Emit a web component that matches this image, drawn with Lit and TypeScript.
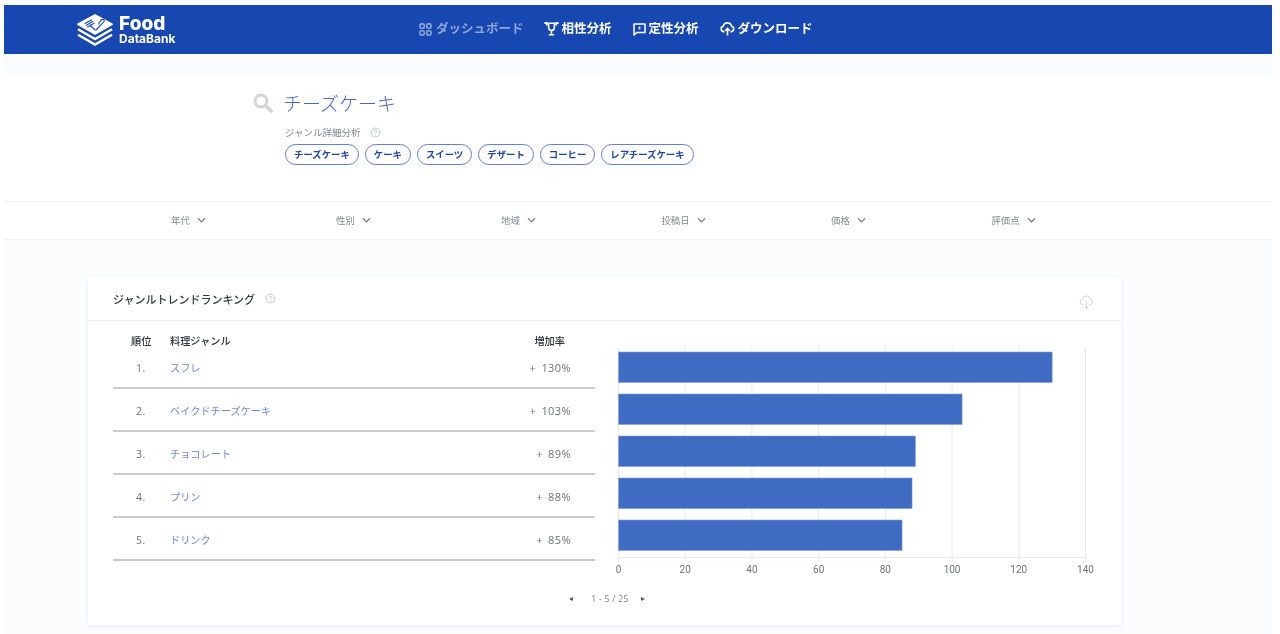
import { LitElement, html, css, svg } from "lit";
import { customElement } from "lit/decorators.js";

const chevron = html`<svg class="chev" viewBox="0 0 10 6" width="9" height="6" fill="none" stroke="#6f7378" stroke-width="1.3"><path d="M1 1l4 4 4-4"/></svg>`;
const help = html`<svg class="help" viewBox="0 0 12 12" width="11" height="11" fill="none" stroke="#b9c0d8" stroke-width="1"><circle cx="6" cy="6" r="4.8"/><path d="M4.6 4.9a1.4 1.4 0 1 1 2.2 1.1c-.5.4-.8.6-.8 1.2"/><path d="M6 8.4v.8"/></svg>`;

const icons: Record<string, unknown> = {
  dash: html`<svg viewBox="0 0 13 13" width="13" height="13" fill="none" stroke="currentColor" stroke-width="1.6"><rect x=".9" y=".9" width="4.4" height="4.4" rx="1.6"/><rect x="7.7" y=".9" width="4.4" height="4.4" rx="1.6"/><rect x=".9" y="7.7" width="4.4" height="4.4" rx="1.6"/><rect x="7.7" y="7.7" width="4.4" height="4.4" rx="1.6"/></svg>`,
  trophy: html`<svg viewBox="0 0 15 14" width="15" height="14" fill="none" stroke="currentColor" stroke-width="1.6"><path d="M4.6 1.2h5.8v4.4a2.9 2.9 0 0 1-5.8 0z"/><path d="M7.5 8.5v3.6M4.8 12.8h5.4"/><path d="M.4 1h2.4v2.4M14.6 1h-2.4v2.4" stroke-width="1.8"/></svg>`,
  msg: html`<svg viewBox="0 0 13 13" width="13" height="13" fill="none" stroke="currentColor" stroke-width="1.5"><path d="M1 1h11v8.4H4L1 12z" stroke-linejoin="round"/><path d="M6.5 3.6v2.8" stroke-width="1.7"/></svg>`,
  cloud: html`<svg viewBox="0 0 15 14" width="15" height="14" fill="none" stroke="currentColor" stroke-width="1.6"><path d="M4.4 9.6H3.6a2.7 2.7 0 0 1-.4-5.3 4.3 4.3 0 0 1 8.4 0 2.7 2.7 0 0 1-.2 5.3h-1"/><path d="M7.5 13.4V6.6M5.2 8.8l2.3-2.4 2.3 2.4"/></svg>`,
};

const nav = [
  { icon: "dash", label: "ダッシュボード", dim: true, gap: 4, ml: 0 },
  { icon: "trophy", label: "相性分析", dim: false, gap: 3, ml: 20 },
  { icon: "msg", label: "定性分析", dim: false, gap: 3, ml: 21 },
  { icon: "cloud", label: "ダウンロード", dim: false, gap: 3, ml: 21 },
];
const chips = ["チーズケーキ", "ケーキ", "スイーツ", "デザート", "コーヒー", "レアチーズケーキ"];
const filters = ["年代", "性別", "地域", "投稿日", "価格", "評価点"];
const rows = [
  { name: "スフレ", pct: 130 },
  { name: "ベイクドチーズケーキ", pct: 103 },
  { name: "チョコレート", pct: 89 },
  { name: "プリン", pct: 88 },
  { name: "ドリンク", pct: 85 },
];
const X0 = 618.5;
const PER = 467 / 140;
const ticks = [0, 20, 40, 60, 80, 100, 120, 140];

@customElement("app-root")
export class AppRoot extends LitElement {
  static styles = css`
    :host {
      display: block;
      height: 634px;
      overflow: hidden;
      background: #fff;
      font-family: "Noto Sans CJK JP", "Noto Sans", sans-serif;
    }
    .frame {
      height: 629px;
      padding: 5px 8px 0 4px;
      display: flex;
      flex-direction: column;
      filter: blur(0.6px);
    }
    .top {
      height: 49px;
      flex: none;
      background: #1748b1;
      display: flex;
      align-items: center;
      color: #fff;
    }
    .logo {
      display: flex;
      align-items: center;
      gap: 6px;
      margin-left: 73px;
      width: 342px;
      flex: none;
    }
    .logo-text {
      display: flex;
      flex-direction: column;
      font-family: Inter, sans-serif;
      font-weight: 800;
    }
    .food { font-size: 19px; line-height: 18px; }
    .bank { font-size: 12px; line-height: 11px; font-weight: 700; }
    .nav { display: flex; align-items: center; margin-top: -3px; }
    .nav-item {
      display: flex;
      align-items: center;
      font-size: 12.5px;
      font-weight: 700;
      line-height: 16px;
      white-space: nowrap;
    }
    .nav-item svg { margin-top: 2px; }
    .nav-item.dim { color: #8ea6d8; }
    .strip { height: 20px; flex: none; background: #fbfcfe; }
    .search {
      height: 127px;
      flex: none;
      background: #fff;
      padding: 19px 0 0 249px;
      box-sizing: border-box;
    }
    .title-row { display: flex; align-items: center; gap: 10px; height: 20px; }
    .title { font-size: 19px; line-height: 20px; color: #4a6bbd; font-weight: 300; }
    .details { margin-left: 32px; }
    .sub {
      display: flex;
      align-items: center;
      gap: 9px;
      margin-top: 12px;
      font-size: 9.5px;
      line-height: 14px;
      color: #85888c;
    }
    .chips { display: flex; gap: 6px; margin-top: 5px; }
    .chip {
      height: 21px;
      box-sizing: border-box;
      border: 1px solid #6480cf;
      border-radius: 11px;
      padding: 0 8px;
      font-size: 9.4px;
      font-weight: 700;
      line-height: 19px;
      color: #1f46a4;
      white-space: nowrap;
    }
    .filters {
      height: 39px;
      flex: none;
      box-sizing: border-box;
      background: #fff;
      border-top: 1px solid #f1f3f7;
      border-bottom: 1px solid #eef1f7;
      padding: 0 0 2px 102px;
      display: grid;
      grid-template-columns: repeat(6, 165px);
      align-items: center;
    }
    .filter {
      display: flex;
      justify-content: center;
      align-items: center;
      gap: 7px;
      font-size: 9.4px;
      line-height: 14px;
      color: #85888c;
    }
    .main {
      flex: 1;
      background: #fbfcfe;
      padding: 37px 0 0 84px;
    }
    .card {
      width: 1033px;
      height: 348px;
      background: #fff;
      box-shadow: 0 1px 4px rgba(190, 200, 225, 0.35);
      border-radius: 2px;
    }
    .card-head {
      height: 44px;
      box-sizing: border-box;
      border-bottom: 1px solid #eef0f4;
      display: flex;
      align-items: center;
      padding: 0 27px 0 25px;
      gap: 10px;
    }
    .card-title { font-size: 11px; font-weight: 500; color: #34373c; line-height: 16px; }
    .dl { margin-left: auto; margin-top: 7px; color: #d0d3d9; display: flex; }
    .card-body { display: flex; height: 260px; padding-left: 25px; }
    .table { width: 482px; flex: none; padding-top: 13px; box-sizing: border-box; }
    .thead, .row {
      display: grid;
      grid-template-columns: 57px 1fr 58px;
      align-items: center;
      padding-right: 24px;
    }
    .thead {
      height: 14px;
      font-size: 10.2px;
      font-weight: 500;
      line-height: 14px;
      color: #2f3237;
    }
    .th-rank { padding-left: 18px; }
    .th-rate { text-align: right; padding-right: 6px; white-space: nowrap; }
    .row {
      height: 43px;
      box-sizing: border-box;
      padding-top: 3px;
      border-bottom: 2px solid #cacbcd;
      font-size: 10.2px;
      line-height: 14px;
      color: #6f7277;
    }
    .row.first { height: 41px; padding-top: 1px; }
    .rank {
      padding-left: 23px;
      font-family: "Open Sans", sans-serif;
      font-size: 10.5px;
      letter-spacing: 0.5px;
    }
    .name { color: #7089d8; }
    .rate {
      text-align: right;
      font-family: "Open Sans", sans-serif;
      font-size: 11px;
      letter-spacing: 0.4px;
      word-spacing: 2px;
      white-space: nowrap;
    }
    .chart { display: block; flex: none; }
    .chart text { font-family: Roboto, "Liberation Sans", sans-serif; font-size: 10px; fill: #6f7276; }
    .pager {
      height: 36px;
      padding-left: 5px;
      display: flex;
      justify-content: center;
      align-items: center;
      gap: 12px;
      font-family: "Open Sans", sans-serif;
      font-size: 8.6px;
      letter-spacing: 0.3px;
      color: #7f8286;
    }
    .count { margin-left: 6px; }
    .arrow { width: 0; height: 0; border-style: solid; border-width: 2.5px 0; border-color: transparent; }
    .arrow.l { border-right: 4px solid #55585c; }
    .arrow.r { border-left: 4px solid #55585c; }
  `;

  private chart() {
    return html`<svg class="chart" width="500" height="260" viewBox="595 321 500 260">
      ${ticks.map((t) => svg`<line x1=${X0 + t * PER} x2=${X0 + t * PER} y1="347" y2="562" stroke="#e8eaee"/>
        <text x=${X0 + t * PER} y="573" text-anchor="middle">${t}</text>`)}
      <line x1=${X0} x2=${X0 + 467} y1="557.5" y2="557.5" stroke="#e8eaee"/>
      ${rows.map((r, i) => svg`<rect x=${X0} y=${352 + i * 42} width=${r.pct * PER} height="30.5" fill="#3f6bc2" stroke="#7f9fe0" stroke-width=".6"/>`)}
    </svg>`;
  }

  render() {
    return html`<div class="frame">
      <header class="top">
        <div class="logo">
          <svg viewBox="0 0 36 32" width="36" height="32">
            <path d="M18 0 35.5 9.6q.8.9 0 1.4L18 21 .5 11q-.8-.5 0-1.4z" fill="#fff"/>
            <path d="M1 15.2 18 25l17-9.8M1 20.8 18 30.6l17-9.8" fill="none" stroke="#fff" stroke-width="2.4"/>
            <g fill="none" stroke="#1748b1" stroke-width="1.1" stroke-linecap="round">
              <path d="M8 9.5 14.5 6M9.3 11.2 15.8 7.6M10.6 12.9 17 9.3M13 11 18 16"/>
              <path d="M19 16 26.5 8.2c1-.9 1-2.2 0-2.7-1.4-.5-2.8.6-3.4 1.9L21.6 10"/>
            </g>
          </svg>
          <div class="logo-text"><span class="food">Food</span><span class="bank">DataBank</span></div>
        </div>
        <nav class="nav">
          ${nav.map((n) => html`<div class="nav-item ${n.dim ? "dim" : ""}" style="margin-left:${n.ml}px;gap:${n.gap}px">${icons[n.icon]}<span>${n.label}</span></div>`)}
        </nav>
      </header>
      <div class="strip"></div>
      <section class="search">
        <div class="title-row">
          <svg viewBox="0 0 20 20" width="20" height="20" fill="none" stroke="#d3d4d6" stroke-width="3"><circle cx="8" cy="8" r="6"/><path d="M12.5 12.5 18 18" stroke-width="3.6" stroke-linecap="round"/></svg>
          <div class="title">チーズケーキ</div>
        </div>
        <div class="details">
          <div class="sub"><span>ジャンル詳細分析</span>${help}</div>
          <div class="chips">${chips.map((c) => html`<span class="chip">${c}</span>`)}</div>
        </div>
      </section>
      <section class="filters">
        ${filters.map((f) => html`<div class="filter"><span>${f}</span>${chevron}</div>`)}
      </section>
      <main class="main">
        <div class="card">
          <div class="card-head">
            <span class="card-title">ジャンルトレンドランキング</span>${help}
            <span class="dl"><svg viewBox="0 0 15 14" width="15" height="14" fill="none" stroke="currentColor" stroke-width="1"><path d="M5 9.6H3.6a2.7 2.7 0 0 1-.4-5.3 4.3 4.3 0 0 1 8.4 0 2.7 2.7 0 0 1-.2 5.3H10"/><path d="M7.5 6.6v7M5.6 11.6l1.9 2 1.9-2"/></svg></span>
          </div>
          <div class="card-body">
            <div class="table">
              <div class="thead"><span class="th-rank">順位</span><span>料理ジャンル</span><span class="th-rate">増加率</span></div>
              ${rows.map((r, i) => html`<div class="row ${i === 0 ? "first" : ""}"><span class="rank">${i + 1}.</span><span class="name">${r.name}</span><span class="rate">+ ${r.pct}%</span></div>`)}
            </div>
            ${this.chart()}
          </div>
          <div class="pager"><span class="arrow l"></span><span class="count">1 - 5 / 25</span><span class="arrow r"></span></div>
        </div>
      </main>
    </div>`;
  }
}
